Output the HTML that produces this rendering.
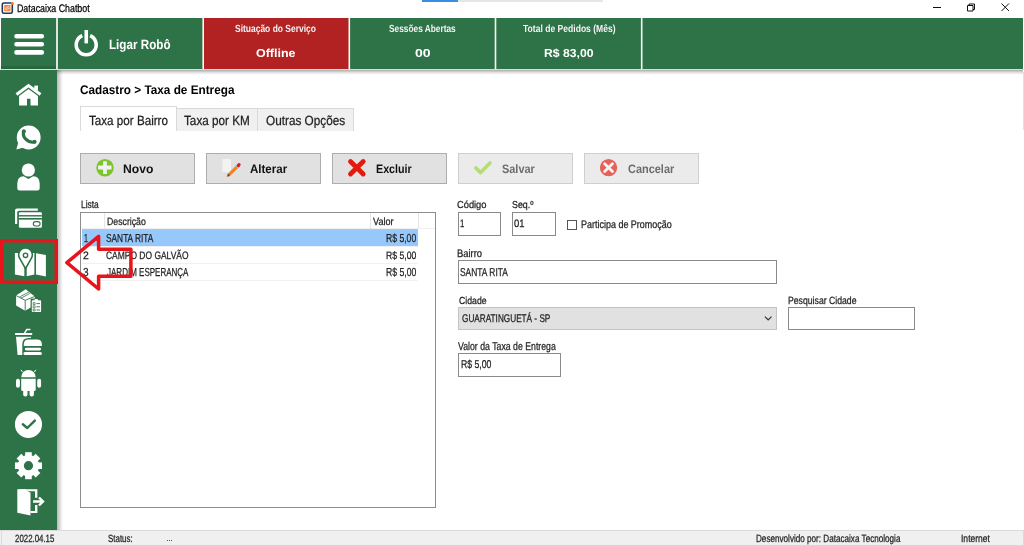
<!DOCTYPE html>
<html><head><meta charset="utf-8"><style>
*{margin:0;padding:0;box-sizing:border-box}
html,body{width:1024px;height:546px;overflow:hidden;background:#fff;position:relative;font-family:"Liberation Sans",sans-serif}
.a{position:absolute}
.t{position:absolute;white-space:pre;transform-origin:0 0;text-rendering:geometricPrecision}
.t.r{-webkit-text-stroke:0.25px currentColor}
.btn{position:absolute;top:153px;width:115px;height:31px;background:#e1e1e1;border:1px solid #adadad}
.btn.dis{background:#ebebeb;border-color:#cfcfcf}
.inp{position:absolute;background:#fff;border:1px solid #8a8a8a}
</style></head><body>
<div class="a" style="left:422px;top:0;width:36px;height:2px;background:#3a8ee0"></div>
<div class="a" style="left:458px;top:0;width:145px;height:2px;background:#e6e6e6"></div>
<div class="a" style="left:1px;top:18px;width:1022px;height:51px;background:#2e7248"></div>
<div class="a" style="left:203px;top:18px;width:146px;height:51px;background:#b22222"></div>
<div class="a" style="left:56px;top:18px;width:2px;height:51px;background:#dbe6dd"></div>
<svg class="a" style="left:0;top:0" width="1024" height="80"><g fill="#f7f7f7"><rect x="202.4" y="18" width="1.6" height="51"/><rect x="348.5" y="18" width="1.6" height="51"/><rect x="494.7" y="18" width="1.6" height="51"/><rect x="640.9" y="18" width="1.6" height="51"/></g></svg>
<div class="a" style="left:1px;top:66px;width:55px;height:3px;background:linear-gradient(#2b6a43,#27613d)"></div>
<div class="a" style="left:0;top:69px;width:1024px;height:1px;background:#dcdcdc"></div>
<div class="a" style="left:57px;top:70px;width:966px;height:5px;background:linear-gradient(rgba(0,0,0,.33),rgba(0,0,0,.22) 25%,rgba(0,0,0,.12) 50%,rgba(0,0,0,.05) 75%,rgba(0,0,0,0))"></div>
<div class="a" style="left:0;top:70px;width:57px;height:460px;background:#2e7248"></div>
<div class="a" style="left:57px;top:70px;width:6px;height:460px;background:linear-gradient(90deg,rgba(0,0,0,.27),rgba(0,0,0,.18) 35%,rgba(0,0,0,.07) 70%,rgba(0,0,0,0))"></div>
<div class="a" style="left:1023px;top:72px;width:1px;height:58px;background:#e0e0e0"></div>
<div class="a" style="left:176px;top:108px;width:82px;height:23px;background:#f0f0f0;border:1px solid #d9d9d9;border-left:none;border-bottom:none"></div>
<div class="a" style="left:257px;top:108px;width:97px;height:23px;background:#f0f0f0;border:1px solid #d9d9d9;border-bottom:none"></div>
<div class="a" style="left:80px;top:106px;width:97px;height:25px;background:#fff;border:1px solid #d9d9d9;border-bottom:none"></div>
<div class="btn" style="left:80px"></div>
<div class="btn" style="left:206px"></div>
<div class="btn" style="left:332px"></div>
<div class="btn dis" style="left:458px"></div>
<div class="btn dis" style="left:584px"></div>
<div class="a" style="left:80px;top:212px;width:356px;height:296px;background:#fff;border:1px solid #8c8c8c"></div>
<div class="a" style="left:82px;top:229px;width:336px;height:17px;background:#96c8fc"></div>
<div class="a" style="left:82px;top:229px;width:336px;height:1px;background:#b4c8dc"></div>
<div class="a" style="left:82px;top:246px;width:336px;height:1px;background:#f0f0f0"></div>
<div class="a" style="left:82px;top:263px;width:336px;height:1px;background:#f0f0f0"></div>
<div class="a" style="left:82px;top:280px;width:336px;height:1px;background:#f0f0f0"></div>
<div class="a" style="left:81px;top:228px;width:354px;height:1px;background:#f0f0f0"></div>
<div class="a" style="left:104px;top:213px;width:1px;height:16px;background:#e5e5e5"></div>
<div class="a" style="left:370px;top:213px;width:1px;height:16px;background:#e5e5e5"></div>
<div class="a" style="left:418px;top:213px;width:1px;height:16px;background:#e5e5e5"></div>
<div class="inp" style="left:458px;top:212px;width:43px;height:24px"></div>
<div class="inp" style="left:512px;top:212px;width:44px;height:24px"></div>
<div class="a" style="left:567px;top:220px;width:10px;height:10px;border:1px solid #555;background:#fff"></div>
<div class="inp" style="left:458px;top:260px;width:319px;height:24px"></div>
<div class="a" style="left:458px;top:307px;width:319px;height:23px;background:#e1e1e1;border:1px solid #c3c3c3"></div>
<div class="inp" style="left:788px;top:307px;width:127px;height:23px"></div>
<div class="inp" style="left:458px;top:353px;width:103px;height:24px"></div>
<div class="a" style="left:0;top:530px;width:1024px;height:16px;background:#f0f0f0;border-top:1px solid #dadada"></div>
<div class="a" style="left:1px;top:531px;width:1px;height:14px;background:#dadada"></div>
<div class="a" style="left:0;top:545px;width:1024px;height:1px;background:#d6d6d6"></div>
<div class="a" style="left:1023px;top:531px;width:1px;height:15px;background:#dadada"></div>
<svg class="a" style="left:0;top:0" width="1024" height="546" viewBox="0 0 1024 546">
<!-- app icon -->
<rect x="2.3" y="3" width="10" height="10.3" rx="1.6" fill="none" stroke="#1d3b5e" stroke-width="1.6"/>
<rect x="4.2" y="5" width="6.3" height="6.3" fill="#f28a4a"/>
<path d="M5 8.5 L9 6.5 M5.5 10 L9.5 8" stroke="#fde0cc" stroke-width="0.8"/>
<circle cx="12.3" cy="3.6" r="1.5" fill="#f27a2a"/>
<!-- window controls -->
<path d="M933 7.5 H941" stroke="#111" stroke-width="1"/>
<path d="M967.5 5.5 h5.5 v5.5 h-5.5 z M969 5.5 v-1.5 h5.5 v5.5 h-1.5" fill="none" stroke="#111" stroke-width="1"/>
<path d="M1001.5 3.5 L1009 11 M1009 3.5 L1001.5 11" stroke="#111" stroke-width="1"/>
<!-- hamburger -->
<g stroke="#fff" stroke-width="4.6" stroke-linecap="round">
<path d="M16.5 36.2 H41.8 M16.5 44.3 H41.8 M16.5 52.4 H41.8"/>
</g>
<!-- power -->
<path d="M82.3 35.6 A10 10 0 1 0 90.1 35.6" fill="none" stroke="#fff" stroke-width="3.6"/>
<path d="M86.25 30 V43.4" stroke="#fff" stroke-width="3.6"/>
<!-- home -->
<polyline points="16.5,94.5 28.5,85.5 40.5,94.5" fill="none" stroke="#fff" stroke-width="3"/>
<rect x="34.3" y="85.6" width="3.7" height="5" fill="#fff"/>
<path d="M19.1 95.9 L28.5 89.1 L38 95.9 V105.5 H30.5 V98.8 H27 V105.5 H19.1 Z" fill="#fff"/>
<!-- whatsapp -->
<circle cx="28.7" cy="137.5" r="11.9" fill="#fff"/>
<path d="M18.2 142.5 L16.4 149.5 L23.5 147.6 Z" fill="#fff"/>
<path d="M23.6 131.5 C22 137 27.5 142.8 34.2 142.2" fill="none" stroke="#2e7248" stroke-width="3.2" stroke-linecap="round"/>
<circle cx="23.9" cy="131.2" r="2" fill="#2e7248"/>
<circle cx="34.6" cy="141.8" r="2" fill="#2e7248"/>
<!-- user -->
<circle cx="28.35" cy="170" r="6.6" fill="#fff"/>
<path d="M17.3 188 V183.5 Q17.3 176.4 23.6 176.2 L28.4 178.9 L33.2 176.2 Q39.7 176.4 39.7 183.5 V188 Q39.7 190.5 37.2 190.5 H19.8 Q17.3 190.5 17.3 188 Z" fill="#fff"/>
<!-- cards -->
<path d="M15 224 V210.5 Q15 208.6 17 208.6 H37.8 V210.8 H19 Q17.2 210.8 17.2 212.6 V224 Z" fill="#fff"/>
<rect x="18.9" y="212.2" width="23" height="15.6" rx="1.2" fill="#fff"/>
<rect x="18.9" y="215.1" width="23" height="1.4" fill="#2e7248"/>
<rect x="18.9" y="218.0" width="23" height="1.6" fill="#2e7248"/>
<rect x="33.3" y="221.6" width="6.8" height="4.4" rx="2.2" fill="none" stroke="#2e7248" stroke-width="1.1"/>
<!-- red selection box -->
<rect x="1.75" y="240.75" width="54.5" height="41.5" fill="none" stroke="#e8141c" stroke-width="3.5"/>
<!-- map -->
<path d="M14.9 252.9 L24.5 252.9 L24.5 276.3 L14.9 274.6 Z" fill="#fff"/>
<path d="M26.5 252.9 L34.4 252.9 L34.4 274.6 L26.5 276.3 Z" fill="#fff"/>
<path d="M36 253.2 L45.9 254.9 L45.9 276.6 L36 274.6 Z" fill="#fff"/>
<path d="M25.5 268.6 L19.6 258.2 A6.8 6.8 0 1 1 31.4 258.2 Z" fill="#fff" stroke="#2e7248" stroke-width="1.6" stroke-linejoin="round"/>
<rect x="24.7" y="268" width="1.7" height="9" fill="#2e7248"/>
<circle cx="25.5" cy="255.3" r="2.2" fill="none" stroke="#2e7248" stroke-width="1.4"/>
<!-- box -->
<path d="M25.7 289.3 L34.8 296.4 L34.8 305 L25.2 310.7 L16.1 305.5 L16.1 295.6 Z" fill="#fff"/>
<path d="M16.1 295.6 L25.2 300.3 L34.8 296.4 M25.2 300.3 V310.7" fill="none" stroke="#2e7248" stroke-width="0.9"/>
<path d="M19.6 296.9 L29 291.9 M20.9 298.2 L30.3 293.2" stroke="#2e7248" stroke-width="0.8"/>
<rect x="30.6" y="298.6" width="11.6" height="14.6" fill="#2e7248"/>
<rect x="31.8" y="300.2" width="9.3" height="11.9" rx="0.8" fill="#fff"/>
<rect x="34.4" y="299" width="3.6" height="2.2" rx="1" fill="#fff"/>
<path d="M33.1 302.6 h2 v2 h-2 z M33.1 305.8 h2 v2 h-2 z M33.1 309 h2 v2 h-2 z" fill="none" stroke="#2e7248" stroke-width="0.7"/>
<path d="M36.4 303.6 H40 M36.4 306.8 H40 M36.4 310 H40" stroke="#2e7248" stroke-width="0.9"/>
<!-- food -->
<path d="M24.4 333.3 L26.8 329.5 H30.4" fill="none" stroke="#fff" stroke-width="1.5"/>
<rect x="15.1" y="333" width="17.1" height="2" fill="#fff"/>
<path d="M16 336.8 H31 L30 355.1 H17.6 Z" fill="#fff"/>
<path d="M22.3 357 V344.2 Q22.3 338.1 28.6 338.1 H37.1 Q43.4 338.1 43.4 344.2 V357 Z" fill="#2e7248"/>
<path d="M23.8 346.1 V344.4 Q23.8 339.6 28.6 339.6 H37.1 Q41.9 339.6 41.9 344.4 V346.1 Z" fill="#fff"/>
<rect x="24.8" y="347.7" width="16.2" height="2.8" rx="1.4" fill="#fff"/>
<rect x="23.5" y="352" width="18.4" height="3.1" rx="1.5" fill="#fff"/>
<!-- android -->
<path d="M21.2 377.2 A7.25 7.25 0 0 1 35.7 377.2 Z" fill="#fff"/>
<path d="M22.6 372 L21 369.8 M34.3 372 L35.9 369.8" stroke="#fff" stroke-width="1"/>
<path d="M21.2 378.8 H35.7 V389.5 Q35.7 391 34.2 391 H22.7 Q21.2 391 21.2 389.5 Z" fill="#fff"/>
<rect x="16" y="378.8" width="3.9" height="8.9" rx="1.95" fill="#fff"/>
<rect x="37.2" y="378.8" width="3.9" height="8.9" rx="1.95" fill="#fff"/>
<rect x="23.2" y="389" width="4.3" height="7.6" rx="2" fill="#fff"/>
<rect x="29.6" y="389" width="4.3" height="7.6" rx="2" fill="#fff"/>
<!-- check circle -->
<circle cx="28.45" cy="424.45" r="13.55" fill="#fff"/>
<path d="M22.8 424.3 L27.3 428 L34.8 420.6" fill="none" stroke="#2e7248" stroke-width="2.4" stroke-linecap="round" stroke-linejoin="round"/>
<!-- gear -->
<g transform="translate(28.46 465.7)" fill="#fff">
<circle r="10.6"/>
<rect x="-3.3" y="-13.5" width="6.6" height="27"/>
<rect x="-3.3" y="-13.5" width="6.6" height="27" transform="rotate(45)"/>
<rect x="-3.3" y="-13.5" width="6.6" height="27" transform="rotate(90)"/>
<rect x="-3.3" y="-13.5" width="6.6" height="27" transform="rotate(135)"/>
<circle r="4.6" fill="#2e7248"/>
</g>
<!-- exit -->
<path d="M17.3 489.3 H37.4 V497.8 H35 V491.3 H30.5 Z" fill="#fff"/>
<path d="M35 505 H37.4 V513 H30.5 V511 H35 Z" fill="#fff"/>
<path d="M17.3 489.3 H25.2 L30.5 492.8 V515.6 L17.3 512.7 Z" fill="#fff"/>
<path d="M33.1 501.5 H42.5" stroke="#fff" stroke-width="2.5"/>
<path d="M39 497.5 L43 501.5 L39 505.5" fill="none" stroke="#fff" stroke-width="2.4"/>
<!-- novo icon -->
<circle cx="105" cy="167.75" r="8.75" fill="#7cc42c"/>
<path d="M98.2 167.5 H111.5 M104.95 161.2 V174" stroke="#f2f2f2" stroke-width="3.8"/>
<!-- alterar icon -->
<rect x="222.4" y="159" width="8.6" height="13.5" fill="#f2f2f2"/>
<path d="M227.8 175.8 L237.5 166.3" stroke="#f5821e" stroke-width="3.2"/>
<path d="M236.6 167.2 L237.6 166.2" stroke="#b8dce8" stroke-width="3.2"/>
<ellipse cx="238.6" cy="165.2" rx="2.3" ry="1.7" transform="rotate(-45 238.6 165.2)" fill="#e41c1c"/>
<path d="M226.7 177 L228.6 173.8 L229.9 175.3 Z" fill="#444"/>
<!-- excluir icon -->
<path d="M350.5 161.5 L363.2 174 M363.2 161.5 L350.5 174" stroke="#e41a0e" stroke-width="4.8" stroke-linecap="round"/>
<!-- salvar icon -->
<path d="M475.8 167.9 L480.6 172.6 L490 163" fill="none" stroke="#b4dd78" stroke-width="3.6" stroke-linecap="round" stroke-linejoin="round"/>
<!-- cancelar icon -->
<circle cx="608.55" cy="167.65" r="8.65" fill="#e8605a"/>
<path d="M604.6 163.7 L612.5 171.6 M612.5 163.7 L604.6 171.6" stroke="#f3f3f3" stroke-width="2.8" stroke-linecap="round"/>
<!-- combo arrow -->
<path d="M764.9 316.7 L768.2 320 L771.5 316.7" fill="none" stroke="#333" stroke-width="1.2"/>
</svg>

<div style="position:absolute;left:0;top:0;width:1024px;height:546px;will-change:transform"><div class="t r" style="left:16.56px;top:3.89px;font-size:11.06px;line-height:11.06px;color:#000;transform:scaleX(0.7990)">Datacaixa Chatbot</div>
<div class="t" style="left:109.47px;top:38.16px;font-size:13.32px;line-height:13.32px;font-weight:bold;color:#fff;transform:scaleX(0.8754)">Ligar Robô</div>
<div class="t" style="left:235.36px;top:25.39px;font-size:10.36px;line-height:10.36px;font-weight:bold;color:#f4f4f4;transform:scaleX(0.8173)">Situação do Serviço</div>
<div class="t" style="left:256.23px;top:47.67px;font-size:11.61px;line-height:11.61px;font-weight:bold;color:#fff;transform:scaleX(1.0729)">Offline</div>
<div class="t" style="left:389.18px;top:25.39px;font-size:10.36px;line-height:10.36px;font-weight:bold;color:#f4f4f4;transform:scaleX(0.8030)">Sessões Abertas</div>
<div class="t" style="left:414.73px;top:47.67px;font-size:11.61px;line-height:11.61px;font-weight:bold;color:#fff;transform:scaleX(1.2118)">00</div>
<div class="t" style="left:522.73px;top:25.39px;font-size:10.36px;line-height:10.36px;font-weight:bold;color:#f4f4f4;transform:scaleX(0.8266)">Total de Pedidos (Mês)</div>
<div class="t" style="left:544.18px;top:47.67px;font-size:11.61px;line-height:11.61px;font-weight:bold;color:#fff;transform:scaleX(1.0505)">R$ 83,00</div>
<div class="t" style="left:79.80px;top:83.70px;font-size:12.54px;line-height:12.54px;font-weight:bold;color:#000;transform:scaleX(0.9391)">Cadastro &gt; Taxa de Entrega</div>
<div class="t r" style="left:89.03px;top:113.73px;font-size:13.29px;line-height:13.29px;color:#222;transform:scaleX(0.8769)">Taxa por Bairro</div>
<div class="t r" style="left:183.82px;top:113.73px;font-size:13.29px;line-height:13.29px;color:#222;transform:scaleX(0.8835)">Taxa por KM</div>
<div class="t r" style="left:265.61px;top:113.73px;font-size:13.29px;line-height:13.29px;color:#222;transform:scaleX(0.8866)">Outras Opções</div>
<div class="t" style="left:123.45px;top:163.27px;font-size:12.20px;line-height:12.20px;font-weight:bold;color:#111;transform:scaleX(0.9948)">Novo</div>
<div class="t" style="left:250.29px;top:163.27px;font-size:12.20px;line-height:12.20px;font-weight:bold;color:#111;transform:scaleX(0.9452)">Alterar</div>
<div class="t" style="left:375.72px;top:163.27px;font-size:12.20px;line-height:12.20px;font-weight:bold;color:#111;transform:scaleX(0.8791)">Excluir</div>
<div class="t" style="left:502.01px;top:163.27px;font-size:12.20px;line-height:12.20px;font-weight:bold;color:#6d6d6d;transform:scaleX(0.8962)">Salvar</div>
<div class="t" style="left:628.05px;top:163.27px;font-size:12.20px;line-height:12.20px;font-weight:bold;color:#6d6d6d;transform:scaleX(0.8984)">Cancelar</div>
<div class="t r" style="left:80.67px;top:200.49px;font-size:10.71px;line-height:10.71px;color:#222;transform:scaleX(0.7879)">Lista</div>
<div class="t r" style="left:106.62px;top:218.34px;font-size:10.45px;line-height:10.45px;color:#222;transform:scaleX(0.8365)">Descrição</div>
<div class="t r" style="left:84.45px;top:233.57px;font-size:11.58px;line-height:11.58px;color:#222;transform:scaleX(0.6136)">1</div>
<div class="t r" style="left:106.19px;top:233.57px;font-size:11.58px;line-height:11.58px;color:#222;transform:scaleX(0.7201)">SANTA RITA</div>
<div class="t r" style="left:386.00px;top:233.57px;font-size:11.58px;line-height:11.58px;color:#222;transform:scaleX(0.7453)">R$ 5,00</div>
<div class="t r" style="left:83.29px;top:250.78px;font-size:10.72px;line-height:10.72px;color:#222;transform:scaleX(0.9732)">2</div>
<div class="t r" style="left:106.49px;top:250.78px;font-size:10.72px;line-height:10.72px;color:#222;transform:scaleX(0.7891)">CAMPO DO GALVÃO</div>
<div class="t r" style="left:386.01px;top:250.78px;font-size:10.72px;line-height:10.72px;color:#222;transform:scaleX(0.8051)">R$ 5,00</div>
<div class="t r" style="left:83.25px;top:266.60px;font-size:11.64px;line-height:11.64px;color:#222;transform:scaleX(0.8653)">3</div>
<div class="t r" style="left:106.57px;top:266.60px;font-size:11.64px;line-height:11.64px;color:#222;transform:scaleX(0.6890)">JARDIM ESPERANÇA</div>
<div class="t r" style="left:385.97px;top:266.60px;font-size:11.64px;line-height:11.64px;color:#222;transform:scaleX(0.7442)">R$ 5,00</div>
<div class="t r" style="left:373.03px;top:218.34px;font-size:10.45px;line-height:10.45px;color:#222;transform:scaleX(0.8735)">Valor</div>
<div class="t r" style="left:457.47px;top:201.08px;font-size:10.05px;line-height:10.05px;color:#222;transform:scaleX(0.9251)">Código</div>
<div class="t r" style="left:512.38px;top:201.08px;font-size:10.05px;line-height:10.05px;color:#222;transform:scaleX(0.8798)">Seq.º</div>
<div class="t r" style="left:459.98px;top:219.48px;font-size:10.89px;line-height:10.89px;color:#222;transform:scaleX(0.7191)">1</div>
<div class="t r" style="left:514.20px;top:219.48px;font-size:10.89px;line-height:10.89px;color:#222;transform:scaleX(0.8664)">01</div>
<div class="t r" style="left:580.51px;top:220.19px;font-size:10.86px;line-height:10.86px;color:#222;transform:scaleX(0.8261)">Participa de Promoção</div>
<div class="t r" style="left:457.22px;top:248.67px;font-size:10.91px;line-height:10.91px;color:#222;transform:scaleX(0.8601)">Bairro</div>
<div class="t r" style="left:460.19px;top:267.84px;font-size:11.46px;line-height:11.46px;color:#222;transform:scaleX(0.7349)">SANTA RITA</div>
<div class="t r" style="left:458.56px;top:297.41px;font-size:10.22px;line-height:10.22px;color:#222;transform:scaleX(0.8506)">Cidade</div>
<div class="t r" style="left:461.54px;top:314.38px;font-size:11.11px;line-height:11.11px;color:#222;transform:scaleX(0.7390)">GUARATINGUETÁ - SP</div>
<div class="t r" style="left:787.87px;top:295.81px;font-size:10.51px;line-height:10.51px;color:#222;transform:scaleX(0.8268)">Pesquisar Cidade</div>
<div class="t r" style="left:458.35px;top:341.51px;font-size:11.28px;line-height:11.28px;color:#222;transform:scaleX(0.7757)">Valor da Taxa de Entrega</div>
<div class="t r" style="left:460.87px;top:360.33px;font-size:11.32px;line-height:11.32px;color:#222;transform:scaleX(0.7681)">R$ 5,00</div>
<div class="t r" style="left:14.56px;top:533.72px;font-size:10.56px;line-height:10.56px;color:#222;transform:scaleX(0.7459)">2022.04.15</div>
<div class="t r" style="left:107.87px;top:533.72px;font-size:10.56px;line-height:10.56px;color:#222;transform:scaleX(0.7518)">Status:</div>
<div class="t r" style="left:756.24px;top:533.72px;font-size:10.56px;line-height:10.56px;color:#222;transform:scaleX(0.7706)">Desenvolvido por: Datacaixa Tecnologia</div>
<div class="t r" style="left:960.54px;top:533.72px;font-size:10.56px;line-height:10.56px;color:#222;transform:scaleX(0.8102)">Internet</div>
<div class="a" style="left:166.8px;top:539.8px;width:5.2px;height:1.6px;background:repeating-linear-gradient(90deg,#555 0 1.2px,transparent 1.2px 2px)"></div></div>
<svg class="a" style="left:0;top:0" width="1024" height="546" viewBox="0 0 1024 546">
<path d="M66.9 262.6 L98.6 236.3 V249.2 H130.9 V276.2 H98.6 V289 Z" fill="none" stroke="#e8141c" stroke-width="3.5" stroke-linejoin="round"/>
</svg>

</body></html>
